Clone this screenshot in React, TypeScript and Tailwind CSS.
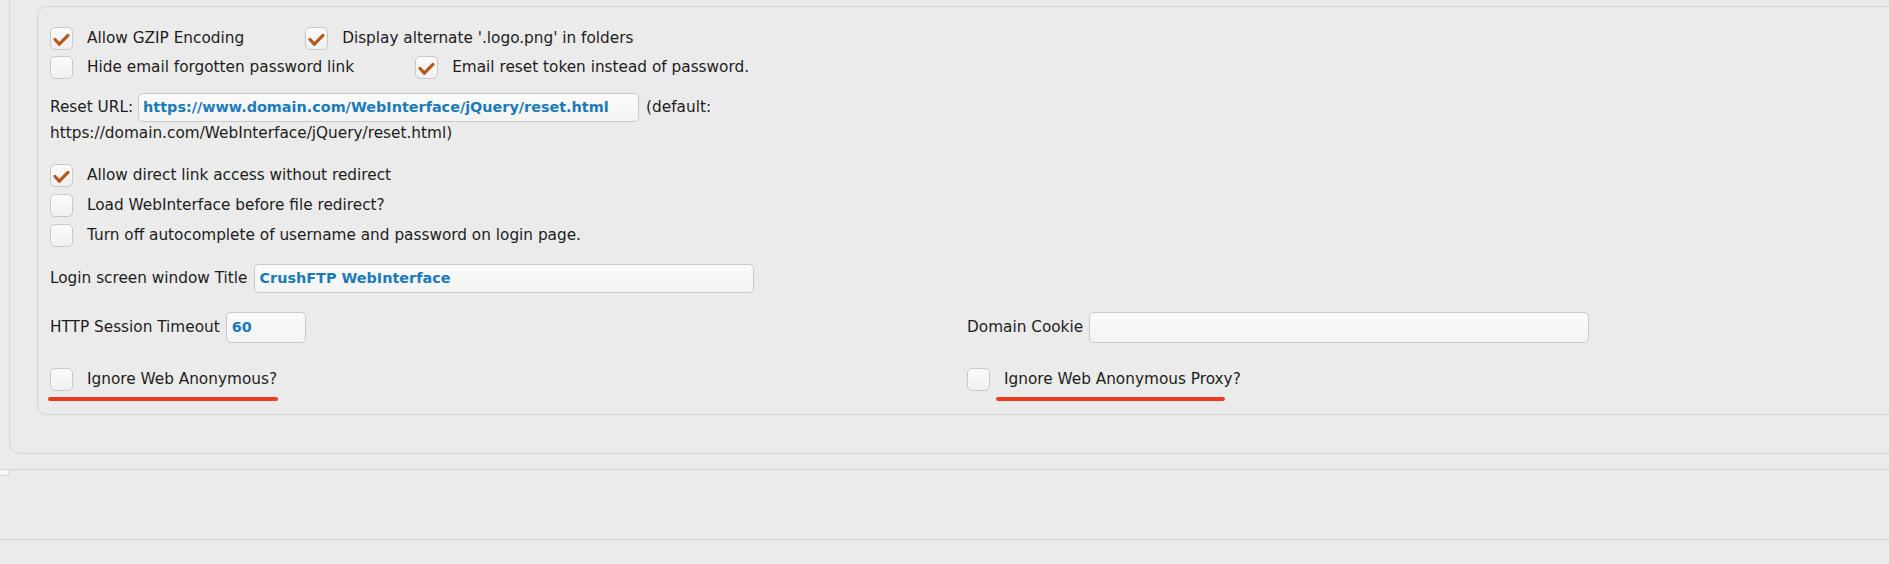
import { ReactNode } from "react";

function Check({ checked }: { checked?: boolean }) {
  return (
    <span className="flex h-[23px] w-[23px] shrink-0 items-center justify-center rounded-[5px] border border-[#c9c9c9] bg-gradient-to-b from-[#fafafa] to-[#f0f0f0]">
      {checked && (
        <svg width="23" height="23" viewBox="0 0 23 23" className="-m-px">
          <path
            d="M5 12.5 L9.3 17.2 L18 8.4"
            fill="none"
            stroke="#b4581f"
            strokeWidth="3.2"
            strokeLinecap="round"
            strokeLinejoin="round"
          />
        </svg>
      )}
    </span>
  );
}

function CheckRow({ checked, label }: { checked?: boolean; label: string }) {
  return (
    <label className="flex h-[24px] items-center gap-[14px]">
      <Check checked={checked} />
      <span className="whitespace-nowrap">{label}</span>
    </label>
  );
}

function Field({
  label,
  value,
  width,
}: {
  label: ReactNode;
  value: string;
  width: string;
}) {
  return (
    <div className="flex h-full items-center gap-[6px]">
      <span className="whitespace-nowrap">{label}</span>
      <div
        className={`flex h-full items-center rounded-[5px] border border-[#c9c9c9] bg-gradient-to-b from-[#fbfbfb] to-[#f3f3f3] px-[5px] text-[14.4px] font-bold text-[#1b7bb8] ${width}`}
      >
        {value}
      </div>
    </div>
  );
}

export default function App() {
  return (
    <div
      className="relative h-[564px] w-[1889px] overflow-hidden bg-[#ebebeb] text-[15.3px] text-[#1c1c1c]"
      style={{ fontFamily: '"DejaVu Sans", "Liberation Sans", sans-serif' }}
    >
      {/* outer panel */}
      <div className="-mt-[10px] ml-[9px] w-[1920px] rounded-[11px] border border-[#d6d6d6] pb-[38px]">
        {/* inner panel */}
        <div className="ml-[27px] mt-[15px] w-[1900px] rounded-[10px] border border-[#d6d6d6] pb-[13px] pl-[12px] pt-[19px]">
          <div className="flex flex-col gap-[5px]">
            <div className="flex gap-[61px]">
              <CheckRow checked label="Allow GZIP Encoding" />
              <CheckRow checked label="Display alternate '.logo.png' in folders" />
            </div>
            <div className="flex gap-[61px]">
              <CheckRow label="Hide email forgotten password link" />
              <CheckRow checked label="Email reset token instead of password." />
            </div>
          </div>

          <div className="mt-[14px] flex h-[29px] items-center gap-[5px]">
            <span>Reset URL:</span>
            <div className="flex h-full w-[501px] items-center rounded-[5px] border border-[#c9c9c9] bg-gradient-to-b from-[#fbfbfb] to-[#f3f3f3] px-[4px] text-[14.4px] font-bold text-[#1b7bb8]">
              https://www.domain.com/WebInterface/jQuery/reset.html
            </div>
            <span className="ml-[2px]">(default:</span>
          </div>
          <div className="mt-[1px] h-[20px] leading-[20px]">
            https://domain.com/WebInterface/jQuery/reset.html)
          </div>

          <div className="mt-[20px] flex flex-col gap-[6px]">
            <CheckRow checked label="Allow direct link access without redirect" />
            <CheckRow label="Load WebInterface before file redirect?" />
            <CheckRow label="Turn off autocomplete of username and password on login page." />
          </div>

          <div className="mt-[17px] h-[29px]">
            <Field label="Login screen window Title" value="CrushFTP WebInterface" width="w-[500px]" />
          </div>

          <div className="mt-[19px] grid h-[31px] grid-cols-[917px_1fr]">
            <Field label="HTTP Session Timeout" value="60" width="w-[80px]" />
            <Field label="Domain Cookie" value="" width="w-[500px]" />
          </div>

          <div className="mt-[24px] grid grid-cols-[917px_1fr]">
            <div>
              <CheckRow label="Ignore Web Anonymous?" />
              <div className="-ml-[2px] mt-[6px] h-[4px] w-[230px] rounded-full bg-[#ee3b1f]" />
            </div>
            <div>
              <CheckRow label="Ignore Web Anonymous Proxy?" />
              <div className="ml-[29px] mt-[6px] h-[4px] w-[229px] rounded-full bg-[#ee3b1f]" />
            </div>
          </div>
        </div>
      </div>

      <div className="relative mt-[15px] h-[71px] border-y border-[#d6d6d6]">
        <span className="absolute -top-[1px] left-0 h-[7px] w-[9px] rounded-r-[3px] border border-l-0 border-[#d6d6d6] bg-[#f7f7f7]" />
      </div>
    </div>
  );
}
